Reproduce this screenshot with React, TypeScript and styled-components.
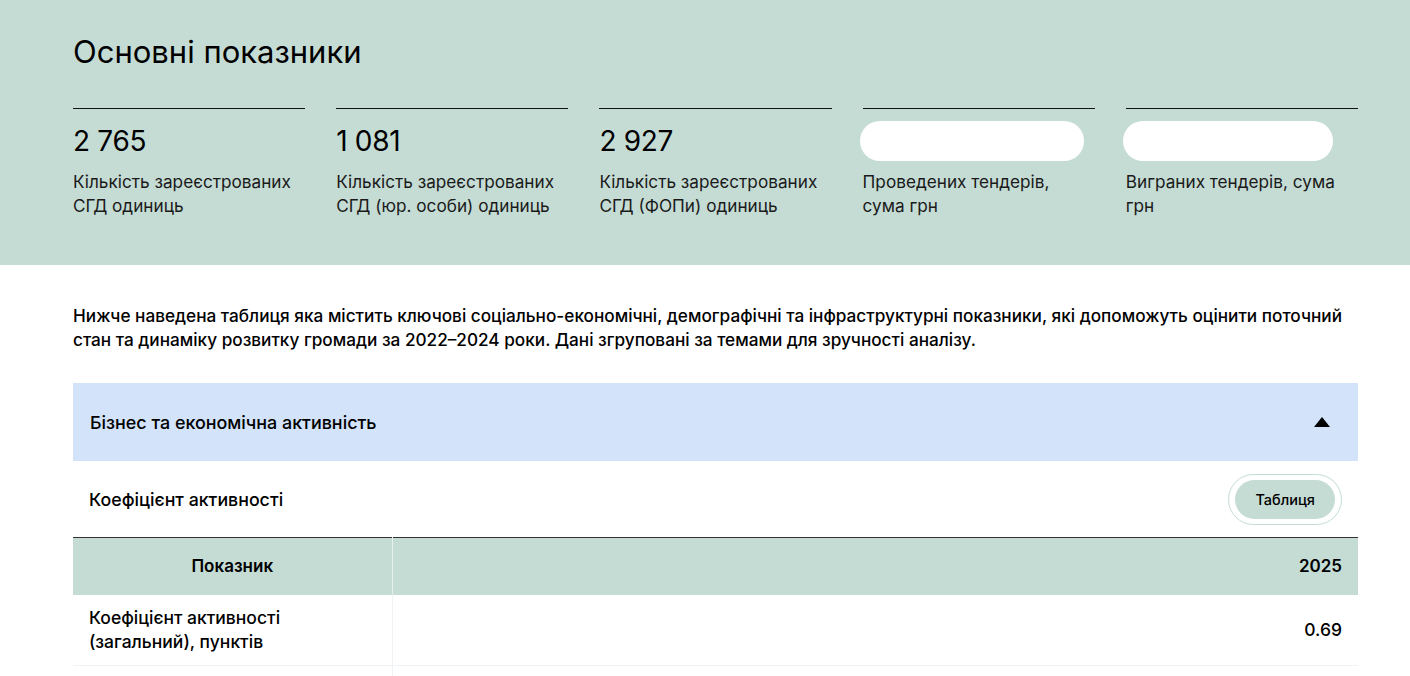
import styled, { createGlobalStyle } from "styled-components";

const GlobalStyle = createGlobalStyle`
  * { box-sizing: border-box; }
  body {
    margin: 0;
    font-family: Inter, "Noto Sans", sans-serif;
    color: #000;
    background: #fff;
  }
`;

const stats = [
  { value: "2 765", label: "Кількість зареєстрованих СГД одиниць" },
  { value: "1 081", label: "Кількість зареєстрованих СГД (юр. особи) одиниць" },
  { value: "2 927", label: "Кількість зареєстрованих СГД (ФОПи) одиниць" },
  { value: null, blob: 224, label: "Проведених тендерів, сума грн" },
  { value: null, blob: 210, label: "Виграних тендерів, сума грн" },
];

const App = () => {
  return (
    <>
      <GlobalStyle />
      <Hero>
        <Container>
          <HeroTitle>Основні показники</HeroTitle>
          <StatsGrid>
            {stats.map((s) => (
              <Stat key={s.label}>
                {s.value ? <StatValue>{s.value}</StatValue> : <Redacted $width={s.blob} />}
                <StatLabel>{s.label}</StatLabel>
              </Stat>
            ))}
          </StatsGrid>
        </Container>
      </Hero>
      <Container>
        <Intro>
          Нижче наведена таблиця яка містить ключові соціально-економічні, демографічні та
          інфраструктурні показники, які допоможуть оцінити поточний стан та динаміку розвитку
          громади за 2022–2024 роки. Дані згруповані за темами для зручності аналізу.
        </Intro>
        <AccordionHeader>
          <span>Бізнес та економічна активність</span>
          <Caret viewBox="0 0 16 10">
            <path d="M8 0 L16 10 L0 10 Z" fill="#000" />
          </Caret>
        </AccordionHeader>
        <SubHeader>
          <span>Коефіцієнт активності</span>
          <ToggleOuter>
            <ToggleButton>Таблиця</ToggleButton>
          </ToggleOuter>
        </SubHeader>
        <Table>
          <thead>
            <tr>
              <HeadCell $align="center" $width="319px">Показник</HeadCell>
              <HeadCell $align="right">2025</HeadCell>
            </tr>
          </thead>
          <tbody>
            <tr>
              <BodyCell>
                Коефіцієнт активності
                <br />
                (загальний), пунктів
              </BodyCell>
              <BodyCell $align="right">0.69</BodyCell>
            </tr>
            <tr>
              <BodyCell>&nbsp;</BodyCell>
              <BodyCell />
            </tr>
          </tbody>
        </Table>
      </Container>
    </>
  );
};

export default App;

const Hero = styled.section`
  background: #c5dcd5;
  padding: 34px 0 47px;
`;

const Container = styled.div`
  width: 1285px;
  margin: 0 0 0 73px;
`;

const HeroTitle = styled.h1`
  margin: 0 0 38px;
  font-size: 31px;
  line-height: 36px;
  font-weight: 400;
`;

const StatsGrid = styled.div`
  display: grid;
  grid-template-columns: repeat(5, 1fr);
  column-gap: 31px;
`;

const Stat = styled.div`
  border-top: 1.5px solid #111;
  padding-top: 12px;
`;

const StatValue = styled.div`
  font-size: 28px;
  line-height: 40px;
  height: 40px;
  margin-bottom: 9px;
  letter-spacing: -0.3px;
`;

const Redacted = styled.div<{ $width?: number }>`
  width: ${(p) => p.$width || 222}px;
  height: 40px;
  margin: 0 0 9px -3px;
  background: #fff;
  border-radius: 20px;
`;

const StatLabel = styled.div`
  font-size: 17.2px;
  line-height: 24px;
  color: #1a1a1a;
  padding-right: 4px;
`;

const Intro = styled.p`
  margin: 39px 0 31px;
  font-size: 17.2px;
  line-height: 24px;
  font-weight: 500;
`;

const AccordionHeader = styled.div`
  height: 78px;
  background: #d2e3fa;
  display: flex;
  align-items: center;
  justify-content: space-between;
  padding: 0 28px 0 17px;
  font-size: 17.9px;
  font-weight: 500;
`;

const Caret = styled.svg`
  width: 16px;
  height: 10px;
`;

const SubHeader = styled.div`
  height: 76px;
  display: flex;
  align-items: center;
  justify-content: space-between;
  padding: 0 16px;
  font-size: 17.8px;
  font-weight: 500;
`;

const ToggleOuter = styled.div`
  border: 1.5px solid #c5dcd5;
  border-radius: 28px;
  padding: 5px 6px;
`;

const ToggleButton = styled.button`
  border: none;
  background: #c5dcd5;
  border-radius: 20px;
  height: 39px;
  padding: 0 20px;
  font-family: inherit;
  font-size: 14.5px;
  font-weight: 500;
  color: #000;
`;

const Table = styled.table`
  width: 100%;
  border-collapse: collapse;
  border-top: 1.5px solid #333;
`;

const HeadCell = styled.th<{ $align?: string; $width?: string }>`
  background: #c5dcd5;
  height: 57px;
  padding: 0 16px;
  text-align: ${(p) => p.$align || "left"};
  width: ${(p) => p.$width || "auto"};
  font-size: 17px;
  font-weight: 600;
  border-right: 1px solid #e8f0ed;

  &:last-child {
    border-right: none;
  }
`;

const BodyCell = styled.td<{ $align?: string }>`
  height: 71px;
  padding: 0 16px;
  text-align: ${(p) => p.$align || "left"};
  font-size: 17.5px;
  line-height: 24px;
  font-weight: 500;
  border-right: 1px solid #f0f3f5;
  border-bottom: 1px solid #f0f3f5;

  &:last-child {
    border-right: none;
  }
`;
